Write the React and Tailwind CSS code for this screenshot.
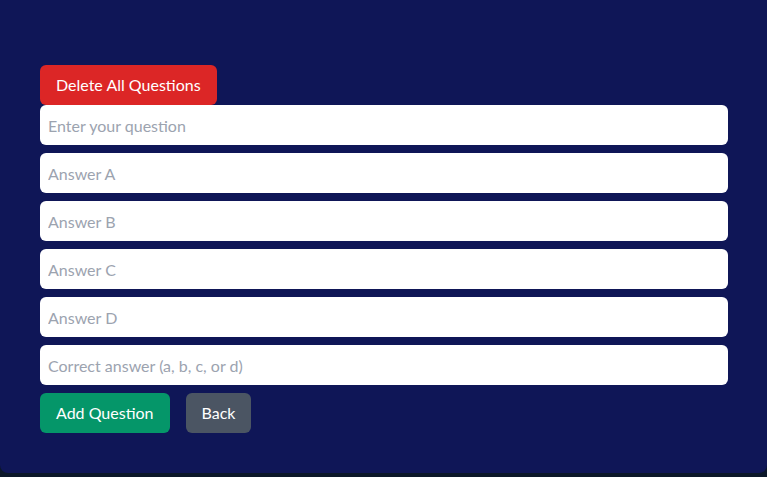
const FIELDS = [
  "Enter your question",
  "Answer A",
  "Answer B",
  "Answer C",
  "Answer D",
  "Correct answer (a, b, c, or d)",
];

export default function App() {
  return (
    <div className="h-[477px] bg-[#0b1729] overflow-hidden" style={{ fontFamily: 'Lato, sans-serif' }}>
      <div className="h-[473px] bg-[#0f1657] rounded-b-lg px-10 pt-[65px]">
        <button className="h-10 px-4 rounded-md bg-[#dc2626] text-white text-base">
          Delete All Questions
        </button>
        <div className="flex flex-col gap-2">
          {FIELDS.map((f) => (
            <input
              key={f}
              placeholder={f}
              className="w-[688px] h-10 px-2 rounded-md bg-white text-base text-gray-800 placeholder:text-[#9ca3af] outline-none"
            />
          ))}
        </div>
        <div className="flex gap-4 mt-2">
          <button className="h-10 px-4 rounded-md bg-[#059669] text-white text-base">
            Add Question
          </button>
          <button className="h-10 px-4 rounded-md bg-[#4b5563] text-white text-base">
            Back
          </button>
        </div>
      </div>
    </div>
  );
}
